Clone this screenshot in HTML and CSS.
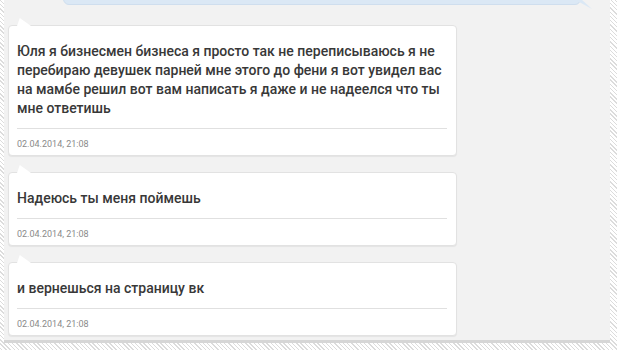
FILE: index.html
```html
<!DOCTYPE html>
<html lang="ru">
<head>
<meta charset="utf-8">
<link rel="stylesheet" href="styles.css">
</head>
<body>
<div class="panel">
  <div class="out-bubble"></div>
  <div class="msg first">
    <p class="text">Юля я бизнесмен бизнеса я просто так не переписываюсь я не перебираю девушек парней мне этого до фени я вот увидел вас на мамбе решил вот вам написать я даже и не надеелся что ты мне ответишь</p>
    <div class="date">02.04.2014, 21:08</div>
  </div>
  <div class="msg">
    <p class="text">Надеюсь ты меня поймешь</p>
    <div class="date">02.04.2014, 21:08</div>
  </div>
  <div class="msg">
    <p class="text">и вернешься на страницу вк</p>
    <div class="date">02.04.2014, 21:08</div>
  </div>
</div>
</body>
</html>
```
FILE: styles.css
```css
html, body {
  margin: 0;
  padding: 0;
}
body {
  width: 617px;
  height: 350px;
  overflow: hidden;
  background: #fff repeating-linear-gradient(45deg, #fff 0 1px, #dcdcdc 1px 2px, #fff 2px 3px);
  font-family: Roboto, "Noto Sans", sans-serif;
}
.panel {
  margin: 0 7px 0 4px;
  height: 340px;
  background: #f2f2f2;
  border-bottom: 3px solid #d6d6d6;
  padding: 0 4px;
  box-sizing: content-box;
  display: flex;
  flex-direction: column;
  gap: 16px;
}
.out-bubble {
  position: relative;
  margin: -10px 25px 4px 55px;
  height: 13px;
  background: #dbe8f5;
  border: 1px solid #cfdeee;
  border-radius: 0 0 6px 6px;
}
.out-bubble::after {
  content: "";
  position: absolute;
  right: -12px;
  bottom: -5px;
  width: 22px;
  height: 12px;
  background: #dbe8f5;
  clip-path: polygon(0 0, 100% 100%, 40% 0);
}
.msg {
  position: relative;
  width: 430px;
  padding: 16px 9px 4px 8px;
  background: #fff;
  border: 1px solid #e2e2e2;
  border-radius: 4px;
  box-shadow: 0 1px 1px rgba(0,0,0,0.06);
}
.msg::before {
  content: "";
  position: absolute;
  left: 8px;
  top: -8px;
  width: 14px;
  height: 8px;
  background: #fff;
  clip-path: polygon(0 100%, 20% 0, 100% 100%);
}
.text {
  margin: 0;
  font-size: 14px;
  line-height: 19px;
  font-weight: 500;
  color: #383838;
  padding-bottom: 10px;
  border-bottom: 1px solid #e0e0e0;
}
.date {
  margin-top: 8px;
  font-size: 9px;
  line-height: 14px;
  color: #8a8a8a;
}
```
